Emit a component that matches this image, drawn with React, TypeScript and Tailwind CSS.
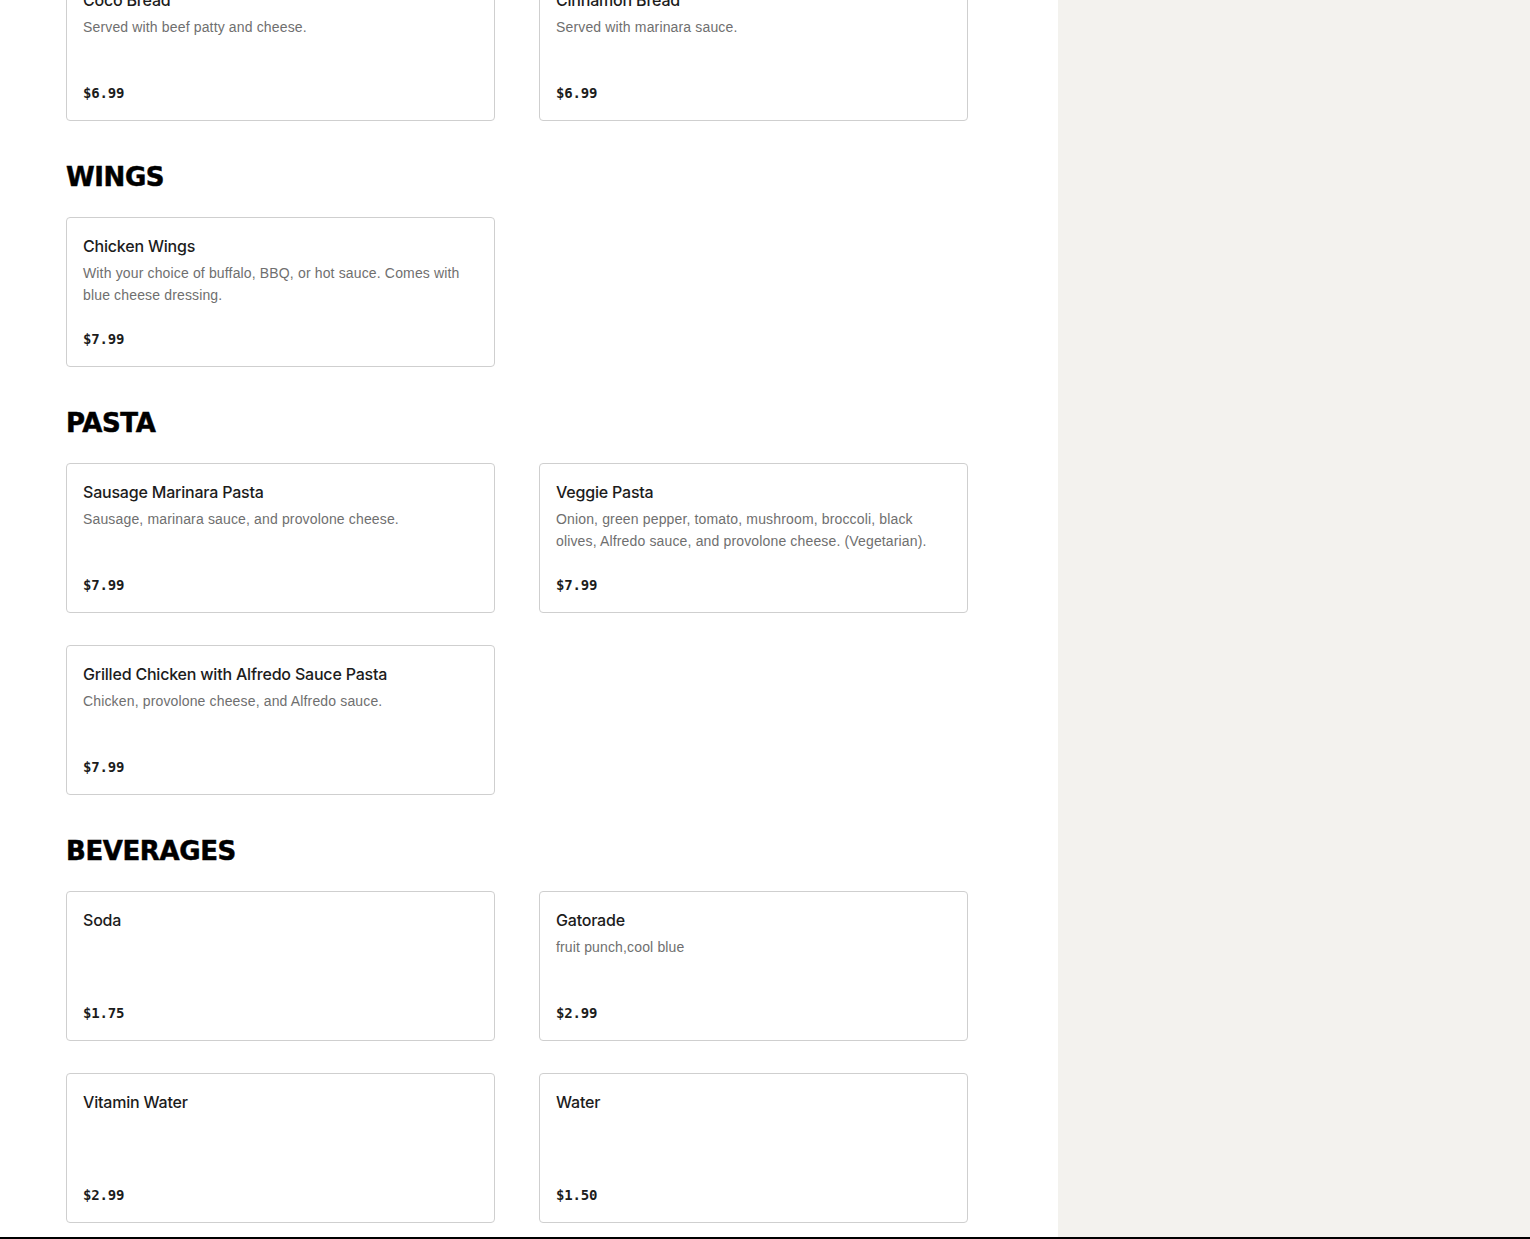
const sections = [
  {
    title: 'WINGS',
    items: [
      {
        name: 'Chicken Wings',
        desc: 'With your choice of buffalo, BBQ, or hot sauce. Comes with blue cheese dressing.',
        price: '$7.99',
      },
    ],
  },
  {
    title: 'PASTA',
    items: [
      { name: 'Sausage Marinara Pasta', desc: 'Sausage, marinara sauce, and provolone cheese.', price: '$7.99' },
      {
        name: 'Veggie Pasta',
        desc: 'Onion, green pepper, tomato, mushroom, broccoli, black olives, Alfredo sauce, and provolone cheese. (Vegetarian).',
        price: '$7.99',
      },
      { name: 'Grilled Chicken with Alfredo Sauce Pasta', desc: 'Chicken, provolone cheese, and Alfredo sauce.', price: '$7.99' },
    ],
  },
  {
    title: 'BEVERAGES',
    items: [
      { name: 'Soda', desc: '', price: '$1.75' },
      { name: 'Gatorade', desc: 'fruit punch,cool blue', price: '$2.99' },
      { name: 'Vitamin Water', desc: '', price: '$2.99' },
      { name: 'Water', desc: '', price: '$1.50' },
    ],
  },
];

const breads = [
  { name: 'Coco Bread', desc: 'Served with beef patty and cheese.', price: '$6.99' },
  { name: 'Cinnamon Bread', desc: 'Served with marinara sauce.', price: '$6.99' },
];

type Item = { name: string; desc: string; price: string };

function MenuCard({ item }: { item: Item }) {
  return (
    <div className="h-[150px] rounded-[4px] border border-[#cfcfcf] bg-white px-4 pt-4 pb-[17px] flex flex-col">
      <div className="text-[16px] leading-6 font-medium text-[#1c1c1c] font-['Inter',sans-serif] tracking-[-0.2px]">
        {item.name}
      </div>
      {item.desc && (
        <p className="mt-1 text-[14px] leading-[22px] text-[#6f6f6f] font-['Liberation_Sans',sans-serif] tracking-[0.15px]">
          {item.desc}
        </p>
      )}
      <div className="mt-auto text-[14px] leading-5 font-bold text-[#1c1c1c] font-['DejaVu_Sans_Mono',monospace] tracking-[-0.2px]">
        {item.price}
      </div>
    </div>
  );
}

export default function App() {
  return (
    <div className="h-[1239px] overflow-hidden flex flex-col bg-white">
      <div className="flex flex-1 min-h-0">
        <main className="w-[1058px] shrink-0 pl-[66px] overflow-hidden">
          <div className="w-[902px] -mt-[29px]">
            {/* tail of the bread section */}
            <div className="grid grid-cols-2 gap-x-[44px] gap-y-8">
              {breads.map(b => (
                <MenuCard key={b.name} item={b} />
              ))}
            </div>

            {sections.map(s => (
              <section key={s.title} className="mt-[40px]">
                <h2 className="mb-6 text-[26px] leading-8 font-bold text-black font-['DejaVu_Sans',sans-serif] tracking-[-0.4px] [-webkit-text-stroke:0.5px_black]">
                  {s.title}
                </h2>
                <div className="grid grid-cols-2 gap-x-[44px] gap-y-8">
                  {s.items.map(it => (
                    <MenuCard key={it.name} item={it} />
                  ))}
                </div>
              </section>
            ))}
          </div>
        </main>
        <aside className="flex-1 bg-[#f3f2ee]" />
      </div>
      <div className="h-[2px] bg-black shrink-0" />
    </div>
  );
}
